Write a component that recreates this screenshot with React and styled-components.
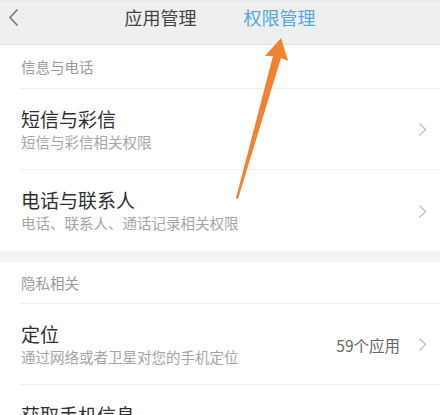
import React from "react";
import styled, { createGlobalStyle } from "styled-components";

const Global = createGlobalStyle`
  html, body { margin: 0; padding: 0; background: #f4f4f4; }
  body { font-family: "Noto Sans CJK SC", "Noto Sans", sans-serif; }
`;

const Page = styled.div`
  position: relative;
  width: 440px;
  height: 415px;
  overflow: hidden;
  background: #f4f4f4;
`;

const NavBar = styled.div`
  display: grid;
  grid-template-columns: 1fr auto 1fr;
  align-items: start;
  height: 39px;
  padding-top: 3px;
  background: #efefef;
  border-top: 2px solid #e4ece6;
  border-bottom: 1px solid #e2e2e2;
  box-sizing: content-box;
`;

const Back = styled.div`
  display: flex;
  align-items: center;
  height: 24px;
  padding-left: 8px;
`;

const Tabs = styled.div`
  display: flex;
  gap: 47px;
`;

const Tab = styled.div`
  font-size: 18px;
  line-height: 24px;
  color: ${(p) => (p.$active ? "#52a8de" : "#444")};
`;

const Section = styled.div`
  background: #fff;
  padding-left: 20px;
  margin-bottom: ${(p) => (p.$gap ? "11px" : "0")};
`;

const SectionHeader = styled.div`
  display: flex;
  align-items: center;
  height: ${(p) => p.$h || 41}px;
  border-bottom: 1px solid #eeeeee;
  font-size: 14.5px;
  color: #9a9a9a;
  padding-left: 1px;
`;

const Row = styled.div`
  display: flex;
  align-items: center;
  height: 81px;
  box-sizing: border-box;
  padding: 1px 13px 0 1px;
  border-bottom: ${(p) => (p.$last ? "none" : "1px solid #eeeeee")};
`;

const RowText = styled.div`
  flex: 1;
  display: flex;
  flex-direction: column;
`;

const Title = styled.div`
  font-size: 19px;
  line-height: 24px;
  color: #2f2f2f;
`;

const Sub = styled.div`
  font-size: 14.5px;
  line-height: 22px;
  color: #a5a5a5;
`;

const Value = styled.div`
  font-size: 15.5px;
  color: #666;
  margin-right: 18px;
`;

const ChevronWrap = styled.div`
  display: flex;
  align-items: center;
`;

const ArrowOverlay = styled.svg`
  position: absolute;
  left: 0;
  top: 0;
  pointer-events: none;
`;

const Chevron = () => (
  <svg width="9" height="15" viewBox="0 0 9 15">
    <path d="M1.5 1.5 L7.5 7.5 L1.5 13.5" fill="none" stroke="#bdbdbd" strokeWidth="1.3" />
  </svg>
);

const BackIcon = () => (
  <svg width="11" height="19" viewBox="0 0 11 19">
    <path d="M9.5 1.5 L2 9.5 L9.5 17.5" fill="none" stroke="#777" strokeWidth="1.6" />
  </svg>
);

export default function App() {
  return (
    <Page>
      <Global />
      <NavBar>
        <Back>
          <BackIcon />
        </Back>
        <Tabs>
          <Tab>应用管理</Tab>
          <Tab $active>权限管理</Tab>
        </Tabs>
        <div />
      </NavBar>
      <Section $gap>
        <SectionHeader $h={43}>信息与电话</SectionHeader>
        <Row>
          <RowText>
            <Title>短信与彩信</Title>
            <Sub>短信与彩信相关权限</Sub>
          </RowText>
          <ChevronWrap>
            <Chevron />
          </ChevronWrap>
        </Row>
        <Row $last>
          <RowText>
            <Title>电话与联系人</Title>
            <Sub>电话、联系人、通话记录相关权限</Sub>
          </RowText>
          <ChevronWrap>
            <Chevron />
          </ChevronWrap>
        </Row>
      </Section>
      <Section>
        <SectionHeader $h={41}>隐私相关</SectionHeader>
        <Row>
          <RowText>
            <Title>定位</Title>
            <Sub>通过网络或者卫星对您的手机定位</Sub>
          </RowText>
          <Value>59个应用</Value>
          <ChevronWrap>
            <Chevron />
          </ChevronWrap>
        </Row>
        <Row $last>
          <RowText>
            <Title>获取手机信息</Title>
            <Sub>获取手机的识别码等信息</Sub>
          </RowText>
        </Row>
      </Section>
      <ArrowOverlay width="440" height="415" viewBox="0 0 440 415">
        <polygon
          points="281,38 288,61 281,58 238,199 236,198 273,56 265,56"
          fill="#f08232"
        />
      </ArrowOverlay>
    </Page>
  );
}
